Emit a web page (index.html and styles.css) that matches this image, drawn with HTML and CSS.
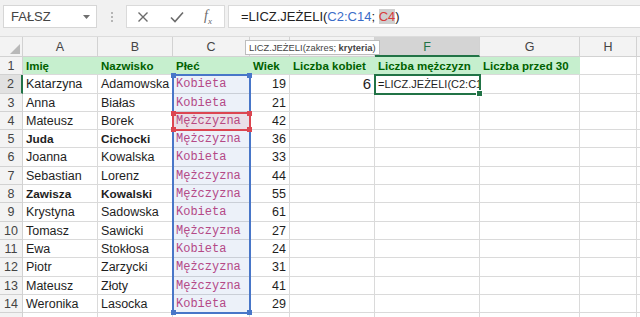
FILE: index.html
```html
<!DOCTYPE html>
<html lang="pl">
<head>
    <meta charset="UTF-8" />
    <title>LICZ.JEŻELI</title>
    <link rel="stylesheet" href="styles.css">
</head>
<body>
    <div class="toolbar">
        <div class="namebox">
            <span>FAŁSZ</span>
            <svg class="drop" width="7" height="4" viewBox="0 0 7 4"><path d="M0 0H7L3.5 4Z" fill="#6f6f6f"/></svg>
        </div>
        <div class="grip"><i></i><i></i><i></i></div>
        <div class="buttons">
            <svg width="12" height="12" viewBox="0 0 12 12"><path d="M1.5 1.5L10.5 10.5M10.5 1.5L1.5 10.5" stroke="#6b6b6b" stroke-width="1.4" fill="none"/></svg>
            <svg width="14" height="12" viewBox="0 0 14 12"><path d="M1 6.5L5 10.5L13 1.5" stroke="#6b6b6b" stroke-width="1.6" fill="none"/></svg>
            <span class="fx">f<sub>x</sub></span>
        </div>
        <div class="formula">=LICZ.JEŻELI(<span class="ref-blue">C2:C14</span>; <span class="ref-red">C4</span>)</div>
    </div>

    <div class="sheet">
        <div class="row head">
            <div class="c corner"><svg width="10" height="10" viewBox="0 0 10 10"><path d="M10 0V10H0Z" fill="#b9b9b9"/></svg></div>
            <div class="c">A</div><div class="c">B</div><div class="c">C</div><div class="c"></div>
            <div class="c"></div><div class="c active">F</div><div class="c">G</div><div class="c">H</div><div class="c"></div>
        </div>
        <div class="row">
            <div class="c rh">1</div>
            <div class="c good">Imię</div><div class="c good">Nazwisko</div><div class="c good">Płeć</div><div class="c good">Wiek</div>
            <div class="c good">Liczba kobiet</div><div class="c good">Liczba mężczyzn</div><div class="c good">Liczba przed 30</div><div class="c"></div><div class="c"></div>
        </div>
        <div class="row">
            <div class="c rh sel">2</div>
            <div class="c">Katarzyna</div><div class="c">Adamowska</div><div class="c sex">Kobieta</div><div class="c num">19</div>
            <div class="c num big">6</div><div class="c edit">=LICZ.JEŻELI(C2:C1</div><div class="c"></div><div class="c"></div><div class="c"></div>
        </div>
        <div class="row">
            <div class="c rh">3</div>
            <div class="c">Anna</div><div class="c">Białas</div><div class="c sex">Kobieta</div><div class="c num">21</div>
            <div class="c"></div><div class="c"></div><div class="c"></div><div class="c"></div><div class="c"></div>
        </div>
        <div class="row">
            <div class="c rh">4</div>
            <div class="c">Mateusz</div><div class="c">Borek</div><div class="c sex">Mężczyzna</div><div class="c num">42</div>
            <div class="c"></div><div class="c"></div><div class="c"></div><div class="c"></div><div class="c"></div>
        </div>
        <div class="row">
            <div class="c rh">5</div>
            <div class="c b">Juda</div><div class="c b">Cichocki</div><div class="c sex">Mężczyzna</div><div class="c num">36</div>
            <div class="c"></div><div class="c"></div><div class="c"></div><div class="c"></div><div class="c"></div>
        </div>
        <div class="row">
            <div class="c rh">6</div>
            <div class="c">Joanna</div><div class="c">Kowalska</div><div class="c sex">Kobieta</div><div class="c num">33</div>
            <div class="c"></div><div class="c"></div><div class="c"></div><div class="c"></div><div class="c"></div>
        </div>
        <div class="row">
            <div class="c rh">7</div>
            <div class="c">Sebastian</div><div class="c">Lorenz</div><div class="c sex">Mężczyzna</div><div class="c num">44</div>
            <div class="c"></div><div class="c"></div><div class="c"></div><div class="c"></div><div class="c"></div>
        </div>
        <div class="row">
            <div class="c rh">8</div>
            <div class="c b">Zawisza</div><div class="c b">Kowalski</div><div class="c sex">Mężczyzna</div><div class="c num">55</div>
            <div class="c"></div><div class="c"></div><div class="c"></div><div class="c"></div><div class="c"></div>
        </div>
        <div class="row">
            <div class="c rh">9</div>
            <div class="c">Krystyna</div><div class="c">Sadowska</div><div class="c sex">Kobieta</div><div class="c num">61</div>
            <div class="c"></div><div class="c"></div><div class="c"></div><div class="c"></div><div class="c"></div>
        </div>
        <div class="row">
            <div class="c rh">10</div>
            <div class="c">Tomasz</div><div class="c">Sawicki</div><div class="c sex">Mężczyzna</div><div class="c num">27</div>
            <div class="c"></div><div class="c"></div><div class="c"></div><div class="c"></div><div class="c"></div>
        </div>
        <div class="row">
            <div class="c rh">11</div>
            <div class="c">Ewa</div><div class="c">Stokłosa</div><div class="c sex">Kobieta</div><div class="c num">24</div>
            <div class="c"></div><div class="c"></div><div class="c"></div><div class="c"></div><div class="c"></div>
        </div>
        <div class="row">
            <div class="c rh">12</div>
            <div class="c">Piotr</div><div class="c">Zarzycki</div><div class="c sex">Mężczyzna</div><div class="c num">31</div>
            <div class="c"></div><div class="c"></div><div class="c"></div><div class="c"></div><div class="c"></div>
        </div>
        <div class="row">
            <div class="c rh">13</div>
            <div class="c">Mateusz</div><div class="c">Złoty</div><div class="c sex">Mężczyzna</div><div class="c num">41</div>
            <div class="c"></div><div class="c"></div><div class="c"></div><div class="c"></div><div class="c"></div>
        </div>
        <div class="row">
            <div class="c rh">14</div>
            <div class="c">Weronika</div><div class="c">Lasocka</div><div class="c sex">Kobieta</div><div class="c num">29</div>
            <div class="c"></div><div class="c"></div><div class="c"></div><div class="c"></div><div class="c"></div>
        </div>
        <div class="row">
            <div class="c rh"></div>
            <div class="c"></div><div class="c"></div><div class="c"></div><div class="c"></div>
            <div class="c"></div><div class="c"></div><div class="c"></div><div class="c"></div><div class="c"></div>
        </div>

        <!-- range highlights drawn over the grid -->
        <div class="range blue">
            <i class="h tl"></i><i class="h tr"></i><i class="h bl"></i><i class="h br"></i>
        </div>
        <div class="range red">
            <i class="h tl"></i><i class="h tr"></i><i class="h bl"></i><i class="h br"></i>
        </div>
        <div class="cursor"><i></i></div>
        <div class="tip">LICZ.JEŻELI(zakres; <b>kryteria</b>)</div>
    </div>
</body>
</html>
```

FILE: styles.css
```css
body {
    margin: 0;
    width: 640px;
    height: 317px;
    overflow: hidden;
    background: #ffffff;
    font-family: "Liberation Sans", Arial, sans-serif;
    color: #1e1e1e;
}

/* formula bar */
.toolbar {
    height: 37px;
    box-sizing: border-box;
    display: flex;
    align-items: flex-start;
    padding-top: 5px;
    background: #f1f1f1;
    border-bottom: 1px solid #dcdcdc;
}
.namebox {
    width: 94px;
    height: 23px;
    margin-left: 3px;
    box-sizing: border-box;
    display: flex;
    align-items: center;
    justify-content: space-between;
    padding: 0 6px 0 7px;
    background: #fff;
    border: 1px solid #d6d6d6;
    font-family: "Liberation Sans Narrow", "Liberation Sans", sans-serif;
    font-size: 13px;
    color: #444;
}
.grip {
    width: 29px;
    height: 23px;
    display: flex;
    flex-direction: column;
    align-items: center;
    justify-content: center;
    gap: 2px;
}
.grip i {
    width: 2px;
    height: 2px;
    background: #b5b5b5;
}
.buttons {
    width: 99px;
    height: 23px;
    box-sizing: border-box;
    display: flex;
    align-items: center;
    justify-content: space-between;
    padding: 0 12px 0 10px;
    background: #fff;
    border: 1px solid #dadada;
}
.fx {
    font-family: "Liberation Serif", serif;
    font-style: italic;
    font-size: 14px;
    color: #6b6b6b;
}
.fx sub {
    font-size: 9px;
}
.formula {
    flex: 1;
    height: 23px;
    margin-left: 3px;
    box-sizing: border-box;
    padding: 0 0 0 12px;
    background: #fff;
    border: 1px solid #dadada;
    border-right: none;
    font-family: "Liberation Sans Narrow", "Liberation Sans", sans-serif;
    font-size: 13px;
    line-height: 21px;
    color: #222;
}
.ref-blue {
    color: #3a6cc8;
}
.ref-red {
    color: #d83b3b;
    background: #cfcfcf;
}

/* grid */
.sheet {
    position: relative;
}
.row {
    display: grid;
    grid-template-columns: 23px 75px 75px 77px 40px 85px 105px 100px 57px 3px;
    height: 18.3px;
    font-size: 12.5px;
}
.c {
    box-sizing: border-box;
    border-right: 1px solid #dadada;
    border-bottom: 1px solid #dadada;
    padding: 0 3px;
    white-space: nowrap;
    overflow: hidden;
    line-height: 18px;
}
.head {
    height: 20px;
    background: #f3f3f3;
    font-size: 12.5px;
    color: #444;
}
.head .c {
    text-align: center;
    line-height: 20px;
    border-color: #d2d2d2;
}
.head .corner {
    display: flex;
    align-items: flex-end;
    justify-content: flex-end;
    padding: 0 2px 2px 0;
}
.head .active {
    background: #d4d4d4;
    color: #217346;
    border-bottom: 2px solid #217346;
}
.rh {
    background: #f3f3f3;
    border-color: #d2d2d2;
    text-align: center;
    padding: 0;
    color: #444;
}
.rh.sel {
    background: #e1e1e1;
    border-right: 2px solid #217346;
}
.good {
    background: #c6efce;
    border-right-color: #c6efce;
    color: #006100;
    font-weight: bold;
    font-size: 11.5px;
}
.num {
    text-align: right;
}
.big {
    font-size: 15px;
}
.b {
    font-weight: bold;
    font-size: 11.8px;
}
.sex {
    font-family: "Liberation Mono", monospace;
    font-size: 12px;
    color: #c2457f;
}
.edit {
    padding-left: 3px;
    font-family: "Liberation Sans Narrow", "Liberation Sans", sans-serif;
    font-size: 11px;
}

/* overlays */
.range {
    position: absolute;
    left: 172px;
    width: 79px;
    box-sizing: border-box;
    border: 2px solid;
}
.range.blue {
    top: 37.3px;
    height: 240px;
    border-color: #4876c8;
    background: rgba(72, 118, 200, 0.1);
}
.range.red {
    top: 75px;
    height: 19.3px;
    border-color: #dc4651;
    background: rgba(220, 70, 81, 0.1);
}
.h {
    position: absolute;
    width: 5px;
    height: 5px;
}
.blue .h { background: #4876c8; }
.red .h { background: #dc4651; }
.tl { left: -3px; top: -3px; }
.tr { right: -3px; top: -3px; }
.bl { left: -3px; bottom: -3px; }
.br { right: -3px; bottom: -3px; }
.cursor {
    position: absolute;
    left: 374px;
    top: 37.3px;
    width: 107px;
    height: 20.3px;
    box-sizing: border-box;
    border: 2px solid #217346;
}
.cursor i {
    position: absolute;
    right: -4px;
    bottom: -4px;
    width: 5px;
    height: 5px;
    background: #217346;
    border: 1px solid #fff;
}
.tip {
    position: absolute;
    left: 245px;
    top: 3px;
    height: 15px;
    box-sizing: border-box;
    padding: 0 3px;
    background: #fff;
    border: 1px solid #bdbdbd;
    font-family: "Liberation Sans Narrow", "Liberation Sans", sans-serif;
    font-size: 9.4px;
    line-height: 13px;
    color: #444;
}
```
